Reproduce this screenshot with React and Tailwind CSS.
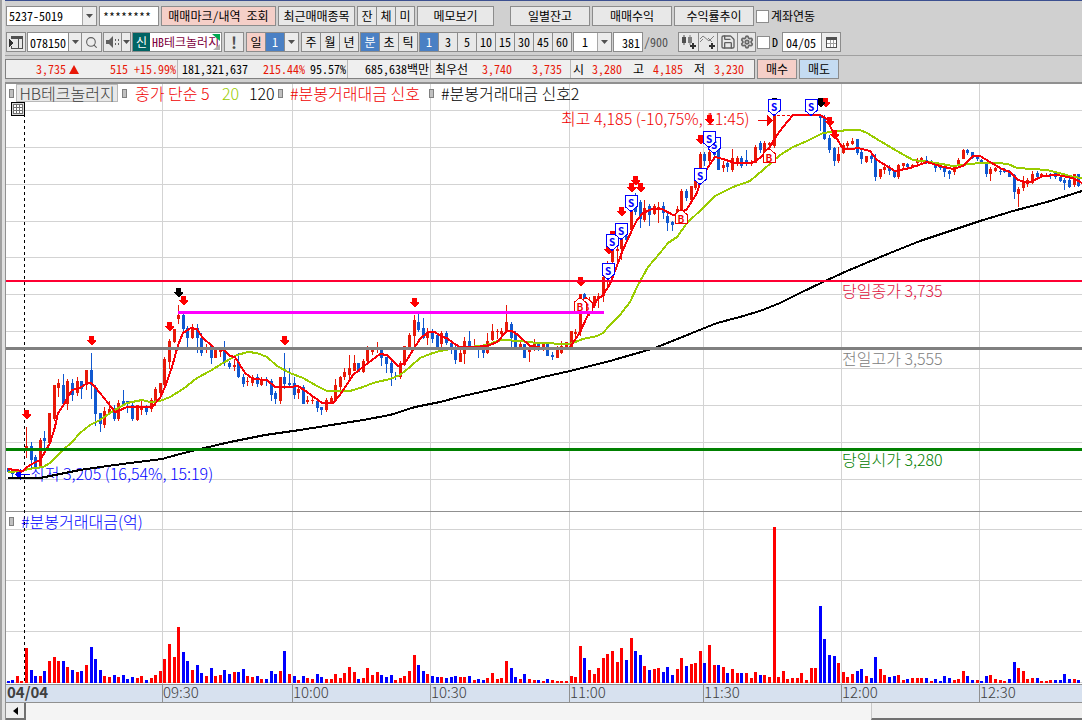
import React from "react";
import { Search, Settings, Save } from "lucide-react";

/* ---------- data ---------- */

// trade value per bar: direction (r = up, b = down) and height
const VOLUME = `
b2 b3 r7 r2 r35 b13 b7 r7 b12 r22 r26 r22 b22 r16 b13 r11 b12 r18 b36 b24 b13 r7 r6 b8 r6 b8 b4 b6 r5 r7
b3 r5 r8 r12 r24 r39 r26 r56 b31 b22 r13 b18 b10 r7 b15 r7 r8 b13 b9 r11 b11 b14 r7 r6 b7 r4 b4 b12 b9 r12
b32 r9 b7 r3 b7 r5 r4 b9 b6 r4 r4 r9 r5 r10 r16 r11 b4 r5 r15 r8 r11 b8 b6 b8 r3 r5 r7 r12 r28 b18
b12 r9 b7 b6 r6 b5 b6 b7 r6 r6 b7 r3 b4 b3 r5 r10 r4 r5 r22 b15 b6 r4 b9 r4 r3 b3 r2 b4 r3 r2
r2 r2 r7 r6 r37 b25 r13 r9 r15 r25 r29 r32 r21 r35 b23 r45 b32 b28 r17 b13 r14 r15 b11 b16 b8 r14 r25 b17 r19 r20
r32 b20 r38 r18 b18 r16 b10 r14 r10 b10 r10 r5 r11 b8 r8 r6 r156 r6 r12 r4 r5 r5 r10 r3 r15 r15 b77 b44 b28 b27
r20 r11 r6 r9 b12 b14 r7 b5 b26 r14 r8 b6 b7 r8 r3 b4 r5 r5 r5 b5 r2 b4 b2 b7 b5 r3 r4 r12 b7 b3
r3 b2 b7 r8 r4 r3 r2 b4 b21 r15 r12 r4 r5 b5 r2 r2 r3 b3 b3 b9 b4 r4 b3 b7`
  .trim()
  .split(/\s+/);

// candles: direction, high, body top, body bottom, low
const CANDLES = `
b,468,468,472,472 b,470,472,474,478 r,471,471,473,475 r,471,471,472,473 r,427,446,448,458 b,442,446,460,470
b,455,457,467,469 r,438,440,467,468 b,431,438,441,450 r,413,413,443,443 r,385,385,419,421 r,379,383,388,397
b,374,385,404,405 r,379,381,404,410 b,379,383,395,401 r,377,381,393,396 b,381,381,389,399 r,370,370,385,390
b,353,370,385,399 b,385,387,414,426 b,413,413,424,432 r,407,411,425,428 r,401,409,413,414 b,405,411,419,421
r,400,403,419,421 b,390,401,404,404 b,401,401,404,413 b,403,405,419,421 r,405,405,420,421 r,401,406,410,415
b,405,407,412,415 r,398,400,409,412 r,387,389,403,406 r,383,383,393,399 r,357,359,385,387 r,339,341,362,369
r,329,329,342,343 r,305,315,319,324 b,313,315,329,331 b,326,328,338,347 r,324,327,338,339 b,324,328,338,353
b,333,338,353,356 r,344,347,349,353 b,346,346,358,364 r,349,350,358,358 r,348,350,352,357 b,341,348,362,366
b,361,363,367,369 r,359,365,367,371 b,353,363,377,378 b,374,377,384,387 r,377,381,382,386 r,375,377,383,386
b,374,377,384,387 r,377,379,385,386 b,377,379,381,386 b,379,381,395,401 b,391,393,399,404 r,377,377,401,404
b,353,377,384,389 b,368,383,385,387 b,377,383,395,399 r,387,389,393,399 b,385,387,404,404 r,396,400,402,404
r,396,400,401,404 b,399,401,408,412 b,407,407,410,415 r,398,400,410,412 r,396,398,402,403 r,379,385,400,401
r,376,377,387,390 r,368,372,377,380 r,355,368,375,379 r,355,363,371,371 b,363,363,372,372 r,359,361,372,373
r,346,350,361,363 r,347,349,352,355 r,342,347,349,353 b,347,350,358,366 b,357,357,364,373 b,361,363,373,386
b,372,376,377,380 r,361,363,377,379 r,346,346,365,366 r,333,335,349,349 r,315,320,336,348 b,314,322,330,332
b,318,328,338,339 r,328,332,338,345 b,329,331,339,343 b,335,335,348,350 r,331,333,344,347 b,331,333,343,345
b,343,343,348,354 b,346,348,360,364 r,348,353,362,362 r,337,341,354,364 b,331,341,346,350 r,339,346,349,350
b,345,347,350,358 b,350,350,353,358 r,333,341,353,354 r,324,331,340,341 r,329,331,332,339 r,328,331,334,338
r,305,322,332,333 b,322,324,338,347 b,331,333,347,349 r,341,344,347,349 b,344,344,358,358 r,346,348,352,362
r,339,344,348,351 b,342,344,347,351 r,342,342,349,351 b,342,344,356,356 b,352,355,357,360 r,346,349,358,358
r,341,346,353,354 r,342,342,349,350 r,331,331,347,349 r,329,332,334,338 r,294,294,332,336 b,293,294,300,308
r,297,300,310,316 r,296,296,306,308 r,293,296,298,308 r,275,277,296,302 r,261,263,275,287 r,232,234,262,264
r,243,249,251,262 r,225,230,249,260 b,232,236,240,242 r,208,210,230,234 b,193,198,212,215 b,200,202,219,228
r,200,208,220,222 b,204,206,215,226 r,204,206,214,215 r,202,207,208,223 b,202,206,213,219 b,211,216,223,231
b,221,222,225,231 r,206,209,214,220 r,189,191,213,214 b,189,191,198,201 r,186,186,200,202 r,177,181,188,190
r,152,154,168,174 b,152,154,161,166 r,147,152,161,163 b,150,152,155,160 b,146,148,170,170 r,161,165,168,172
b,161,163,167,172 r,149,158,170,172 r,156,158,162,166 b,156,158,166,168 b,150,160,162,166 r,160,162,164,166
r,145,147,163,163 b,141,143,150,153 r,141,143,152,158 r,142,143,145,150 r,114,115,146,148 - - - - - - - - -
b,115,115,118,131 b,115,117,139,140 b,135,138,150,153 b,147,148,161,166 r,147,154,161,163 r,143,145,153,154
r,141,143,146,149 r,138,141,144,145 b,139,139,153,155 b,149,152,159,164 r,156,156,162,163 b,155,156,159,163
b,154,158,177,181 r,169,169,177,179 r,165,167,170,174 b,165,167,171,175 b,171,171,177,178 r,164,165,177,179
r,163,163,166,170 b,163,164,167,169 r,164,165,166,168 r,158,160,163,167 r,157,158,161,163 b,156,160,162,164
b,160,161,163,164 b,162,163,168,172 b,165,166,168,170 b,165,167,172,177 b,170,171,174,179 r,165,167,172,175
r,158,160,166,167 r,149,150,159,159 b,149,150,153,155 b,152,152,158,159 b,156,157,159,161 b,159,160,163,164
b,162,163,174,177 r,167,169,174,181 r,167,168,171,172 b,169,171,172,175 b,168,170,172,173 b,170,171,177,177
b,174,175,192,199 r,187,189,194,207 r,176,181,188,191 r,178,180,184,187 r,171,174,183,184 b,171,173,177,180
r,173,174,176,178 r,173,175,176,177 b,173,174,176,179 b,171,173,177,179 b,175,177,181,182 b,178,180,183,190
b,178,180,187,188 r,174,174,185,187 b,174,174,186,187 b,181,183,187,190`
  .trim()
  .split(/\s+/);

const MA5 =
  "8,469 15,470 23,471 27,467 32,464 40,460 45,452 50,443 55,427 58,413 63,406 68,397 72,390 80,388 87,383 91,383 95,387 100,393 108,403 115,412 118,411 127,407 152,407 160,398 165,387 172,367 178,345 183,333 191,328 197,329 202,337 213,347 220,350 224,350 230,356 235,357 240,365 245,373 253,379 267,380 275,387 290,387 298,386 307,392 322,403 333,403 340,395 353,375 368,363 380,354 387,355 398,366 405,363 413,350 420,339 428,332 435,332 442,337 447,338 453,343 460,347 477,347 490,345 497,342 507,331 512,331 518,335 530,346 550,349 568,349 573,343 580,332 588,315 597,300 603,295 610,284 618,263 622,252 631,232 637,220 643,213 652,209 662,209 673,215 678,215 687,209 697,193 700,183 708,167 715,157 723,159 735,163 752,163 760,158 770,147 775,138 783,127 793,115 820,115 827,119 832,130 843,149 852,149 858,148 870,151 877,160 895,171 910,168 927,162 940,166 953,169 963,166 973,156 980,156 990,162 1002,169 1010,172 1018,180 1028,183 1043,176 1057,175 1073,178 1082,183";
const MA20 =
  "8,472 22,471 28,469 43,467 50,463 63,450 72,442 80,433 90,425 100,420 113,411 127,403 142,400 150,402 160,401 170,397 183,389 197,378 210,371 223,363 237,355 248,352 257,353 267,357 277,366 290,373 303,378 317,386 327,391 350,391 363,387 373,383 390,379 400,375 410,367 420,358 430,354 440,351 450,349 470,347 487,345 497,341 503,340 520,341 537,343 570,344 583,339 597,336 603,333 610,325 620,315 630,302 638,285 648,267 660,253 668,243 677,237 687,223 703,208 715,196 733,187 750,181 763,170 780,155 793,147 807,141 823,133 840,131 847,130 860,130 867,133 880,141 897,151 913,160 930,162 953,166 980,163 997,163 1008,164 1017,168 1047,170 1063,174 1073,177 1082,178";
const MA120 =
  "8,478 40,478 60,474 80,470 100,467 130,463 162,459 180,454 200,449 230,442 265,435 300,430 363,420 390,415 415,407 440,402 463,396 490,390 517,384 543,377 570,371 590,366 610,361 655,348 702,329 717,323 740,317 760,311 780,303 800,293 823,282 847,271 890,253 920,241 947,232 980,221 1013,211 1047,202 1082,191";

const RED_ARROWS = [
  [26, 410], [91, 336], [169, 322], [183, 296], [284, 336], [414, 298], [580, 277],
  [608, 245], [612, 231], [621, 207], [631, 183], [635, 176], [640, 183], [700, 135],
  [709, 115], [825, 98], [829, 117], [834, 130],
];
const BLACK_ARROWS = [[178, 288], [774, 98], [820, 98]];
const SELLS = [[608, 263], [612, 234], [621, 223], [631, 195], [700, 168], [714, 137], [709, 131], [774, 99], [811, 99]];
const BUYS = [[586, 297], [580, 297], [681, 209], [769, 148]];
const TIMES = [[162, "09:30"], [292, "10:00"], [430, "10:30"], [569, "11:00"], [703, "11:30"], [841, "12:00"], [979, "12:30"]];
const H_GRID = [110, 147, 184, 221, 257, 294, 331, 368, 405, 442, 479, 529, 580, 631, 682];

const barX = (i) => Math.floor(8 + 4.615 * i);

/* ---------- chart ---------- */

function DownArrow({ x, y, color }) {
  return <path d={`M${x - 2} ${y}h5v4h2v1l-4 4h-1l-4 -4v-1h2z`} fill={color} />;
}

function SellMark({ x, y }) {
  return (
    <g>
      <path d={`M${x - 6} ${y + 0.5}h12v11l-6 5l-6 -5z`} fill="#fff" stroke="#0000ff" />
      <text x={x} y={y + 12} textAnchor="middle" fontSize="10" fontWeight="700" fill="#0000ff">S</text>
    </g>
  );
}

function BuyMark({ x, y }) {
  return (
    <g>
      <path d={`M${x - 6} ${y + 14.5}h12v-9l-6 -5l-6 5z`} fill="#fff" stroke="#f00000" />
      <text x={x} y={y + 14} textAnchor="middle" fontSize="10" fontWeight="700" fill="#f00000">B</text>
    </g>
  );
}

function Chart() {
  return (
    <svg
      className="block h-[619px] w-full font-['Noto_Sans_CJK_KR',sans-serif] text-base font-light"
      role="img"
      aria-label="HB테크놀러지 분봉 차트"
    >
      <g transform="translate(-6 -84)" shapeRendering="crispEdges">
        {H_GRID.map((y) => (
          <rect key={y} x="6" y={y} width="100%" height="1" fill="#d3d3d3" />
        ))}
        {TIMES.map(([x]) => (
          <rect key={x} x={x} y="84" width="1" height="600" fill="#d3d3d3" />
        ))}
        <rect x="6" y="511" width="100%" height="1" fill="#909090" />
        <path d="M24.5 84V684" stroke="#000" strokeDasharray="3 3" />

        {VOLUME.map((v, i) => {
          const h = Number(v.slice(1));
          return <rect key={i} x={barX(i) - 1} y={683 - h} width="3" height={h} fill={v[0] === "r" ? "#ff0000" : "#0000ff"} />;
        })}

        {CANDLES.map((c, i) => {
          if (c === "-") return null;
          const [dir, hi, top, bottom, lo] = c.split(",");
          const x = barX(i);
          return (
            <g key={i} fill={dir === "r" ? "#e81808" : "#1058d0"}>
              <rect x={x} y={hi} width="1" height={Math.max(1, lo - hi)} />
              <rect x={x - 1} y={top} width="3" height={Math.max(1, bottom - top)} />
            </g>
          );
        })}

        <g fill="#0000ff">
          <path d="M15 474.5l6 -6v12z" />
          <rect x="21" y="474" width="9" height="1" />
          <text x="30" y="480">최저 3,205 (16,54%, 15:19)</text>
        </g>

        <g fill="none" strokeWidth="2">
          <polyline points={MA20} stroke="#99cc00" />
          <polyline points={MA120} stroke="#000" />
          <polyline points={MA5} stroke="#f80008" />
        </g>

        <g fill="#f00000">
          <text x="561" y="125">최고 4,185 (-10,75%, 11:45)</text>
          <rect x="758" y="120" width="9" height="1" />
          <path d="M767 115l6 5.5l-6 5.5z" />
          <path d="M777 115.5H793" stroke="#f00000" strokeDasharray="3 2" />
        </g>

        {RED_ARROWS.map(([x, y]) => <DownArrow key={`${x}-${y}`} x={x} y={y} color="#ff0000" />)}
        {BLACK_ARROWS.map(([x, y]) => <DownArrow key={x} x={x} y={y} color="#000" />)}
        {BUYS.map(([x, y]) => <BuyMark key={x} x={x} y={y} />)}
        {SELLS.map(([x, y]) => <SellMark key={x} x={x} y={y} />)}

        <rect x="6" y="280" width="100%" height="2" fill="#ff0033" />
        <rect x="6" y="347" width="100%" height="3" fill="#808080" />
        <rect x="6" y="448" width="100%" height="3" fill="#008000" />
        <rect x="178" y="311" width="426" height="3" fill="#ff00ff" />

        <text x="842" y="297" fill="#e0103c">당일종가 3,735</text>
        <text x="842" y="365" fill="#808080">전일고가 3,555</text>
        <text x="842" y="466" fill="#008000">당일시가 3,280</text>

        <rect x="6" y="684" width="100%" height="19" fill="#d7e1ef" />
        <rect x="6" y="684" width="100%" height="1" fill="#909090" />
        <rect x="6" y="702" width="100%" height="1" fill="#909090" />
        <g fontSize="15" fill="#404040">
          <text x="7" y="698" fontWeight="700">04/04</text>
          {TIMES.map(([x, t]) => (
            <g key={t}>
              <rect x={x} y="684" width="1" height="19" fill="#909090" />
              <text x={x + 1} y="698">{t}</text>
            </g>
          ))}
        </g>
      </g>
    </svg>
  );
}

/* ---------- toolbar pieces ---------- */

const edge = "border border-[#8c8c8c]";

function Tri({ className = "" }) {
  return (
    <svg aria-hidden="true" className={`h-[4px] w-[7px] ${className}`} viewBox="0 0 7 4">
      <path d="M0 0h7L3.5 4z" fill="#505050" />
    </svg>
  );
}

function DropButton({ label, className = "w-[14px]" }) {
  return (
    <button aria-label={label} className={`flex h-5 shrink-0 items-center justify-center border-y border-r border-[#8c8c8c] bg-[#ececec] ${className}`}>
      <Tri />
    </button>
  );
}

function Btn({ children, className = "", tone = "bg-[#e8e8e8]", label }) {
  return (
    <button aria-label={label} className={`flex h-5 shrink-0 items-center justify-center whitespace-pre ${edge} ${tone} ${className}`}>
      {children}
    </button>
  );
}

function Segments({ items, active, className = "" }) {
  return (
    <div className={`flex shrink-0 ${edge} ${className}`}>
      {items.map((t) => (
        <button
          key={t}
          aria-pressed={t === active}
          className={`h-[18px] flex-1 border-r border-[#8c8c8c] last:border-r-0 ${t === active ? "bg-[#4a80c4] text-white" : "bg-[#e8e8e8]"}`}
        >
          {t}
        </button>
      ))}
    </div>
  );
}

function Select({ label, value, className }) {
  return (
    <div className={`relative h-5 shrink-0 ${edge} bg-white ${className}`}>
      <select aria-label={label} defaultValue={value} className="block h-[18px] w-full appearance-none bg-transparent px-[2px] outline-none">
        <option>{value}</option>
      </select>
      <span className="pointer-events-none absolute inset-y-0 right-0 flex w-[14px] items-center justify-center border-l border-[#a8a8a8] bg-[#ececec]">
        <Tri />
      </span>
    </div>
  );
}

function Check({ id, label }) {
  return (
    <div className="flex shrink-0 items-center gap-[2px]">
      <input id={id} type="checkbox" className="h-[13px] w-[13px] appearance-none border border-[#8c8c8c] bg-white" />
      <label htmlFor={id}>{label}</label>
    </div>
  );
}

function Stat({ children, className = "" }) {
  return <span className={`shrink-0 text-right ${className}`}>{children}</span>;
}

function Marker() {
  return <span className="h-[9px] w-[5px] shrink-0 border border-[#808080] bg-[#c0c0c0]" />;
}

/* ---------- page ---------- */

export default function App() {
  return (
    <div className="flex min-h-screen overflow-hidden bg-[#d0d0d0] font-['Noto_Sans_Mono_CJK_KR','Noto_Sans_CJK_KR',monospace] text-xs leading-4 text-black">
      <div className="w-[5px] shrink-0 border-r-3 border-[#e0e0e0] bg-[#a0a0a0]" />
      <div className="min-w-0 flex-1">
        <header className="overflow-hidden border-t border-[#3c5090] whitespace-nowrap">
          <div className="flex items-center gap-[2px] pt-[5px] pl-px">
            <Select label="계좌" value="5237-5019" className="w-[91px]" />
            <input aria-label="비밀번호" defaultValue="********" className={`h-5 w-[60px] shrink-0 bg-white px-[3px] outline-none ${edge}`} />
            <Btn tone="bg-[#f5cfc8]" className="w-[115px]">매매마크/내역 조회</Btn>
            <Btn className="w-[77px]">최근매매종목</Btn>
            <Segments items={["잔", "체", "미"]} className="w-[58px]" />
            <Btn className="w-[77px]">메모보기</Btn>
            <Btn className="ml-[14px] w-[80px]">일별잔고</Btn>
            <Btn className="w-[80px]">매매수익</Btn>
            <Btn className="w-[80px]">수익률추이</Btn>
            <Check id="link-account" label="계좌연동" />
          </div>

          <div className="flex items-center gap-px border-b border-[#a0a0a0] pt-[6px] pb-[3px] pl-px">
            <Btn label="창 전환" className="w-[20px]">
              <svg className="h-[14px] w-[14px]" viewBox="0 0 14 14" fill="none" shapeRendering="crispEdges">
                <path d="M2.5 3V1.500H13.500V13H2.500V11" stroke="#505050" />
                <path d="M2 1h12v3H2z" fill="#505050" />
                <path d="M9.500 4v9" stroke="#505050" />
                <path d="M0 4v8h1v-1h1v-1h1V9h1V7H3V6H2V5H1V4z" fill="#303030" />
              </svg>
            </Btn>
            <div className="flex">
              <input aria-label="종목코드" defaultValue="078150" className={`h-5 w-[42px] bg-white px-[2px] outline-none ${edge}`} />
              <DropButton label="종목 목록" className="w-[13px]" />
              <button aria-label="종목 검색" className="flex h-5 w-[20px] items-center justify-center border-y border-r border-[#8c8c8c] bg-[#ececec]">
                <Search size={13} strokeWidth={2} color="#606060" />
              </button>
            </div>
            <div className="flex">
              <Btn label="소리" className="w-[19px]">
                <svg className="h-3 w-[14px]" viewBox="0 0 14 12">
                  <path d="M0 4h3l4 -4v12l-4 -4H0z" fill="#606060" />
                  <path d="M9 3h1v2H9zM12 3h1v2h-1zM9 7h1v2H9zM12 7h1v2h-1z" fill="#606060" />
                </svg>
              </Btn>
              <DropButton label="소리 설정" className="w-[9px]" />
            </div>
            <div className={`relative flex h-5 w-[90px] shrink-0 items-center bg-white ${edge}`}>
              <span className="flex h-[18px] w-[17px] items-center justify-center bg-[#006464] text-white">신</span>
              <span className="w-[70px] overflow-hidden pl-[2px] text-[#800040]">HB테크놀러지</span>
              <svg aria-hidden="true" className="absolute right-px bottom-px h-4 w-2" viewBox="0 0 8 16">
                <path d="M0 0h8v7z" fill="#00a850" />
                <path d="M8 10v6H1z" fill="#b0b0b0" />
              </svg>
            </div>
            <Btn className="mx-px w-[20px] text-base font-bold text-[#505050]">!</Btn>
            <div className="flex">
              <Btn tone="bg-[#f5cfc8]" className="w-[19px] border-r-0">일</Btn>
              <Btn tone="bg-[#4a80c4]" className="w-[20px] text-white">1</Btn>
              <DropButton label="일 주기" />
            </div>
            <Segments items={["주", "월", "년"]} className="ml-px w-[58px]" />
            <Segments items={["분", "초", "틱"]} active="분" className="w-[58px]" />
            <Segments items={["1", "3", "5", "10", "15", "30", "45", "60"]} active="1" className="w-[153px]" />
            <Select label="분 주기" value="1" className="w-[39px] pl-[6px]" />
            <input aria-label="표시 봉 수" defaultValue="381" className={`h-5 w-[30px] shrink-0 bg-white px-[2px] text-right outline-none ${edge}`} />
            <span className="w-[33px] shrink-0 text-[#505050]">/900</span>
            <div className="flex">
              <Btn label="봉 추가" className="w-[20px] border-r-0">
                <svg className="h-[14px] w-[16px]" viewBox="0 0 16 14">
                  <path d="M1 2h4v6H1zM2.500 0h1v10h-1z" fill="#505050" />
                  <path d="M7 2h4v6H7zM8.500 0h1v10h-1z" fill="#808080" />
                  <path d="M11 8h2v2h2v2h-2v2h-2v-2H9v-2h2z" fill="#303030" />
                </svg>
              </Btn>
              <Btn label="지표 추가" className="w-[19px] border-r-0">
                <svg className="h-[14px] w-[16px]" viewBox="0 0 16 14">
                  <path d="M0 4l3 -3l6 5l5 -5M0 7l3 -3M8 3l4 4" fill="none" stroke="#808080" />
                  <path d="M11 8h2v2h2v2h-2v2h-2v-2H9v-2h2z" fill="#303030" />
                </svg>
              </Btn>
              <Btn label="저장" className="w-[20px] border-r-0">
                <Save size={16} strokeWidth={2} color="#606060" />
              </Btn>
              <Btn label="설정" className="w-[19px]">
                <Settings size={14} strokeWidth={3} color="#686868" />
              </Btn>
            </div>
            <div className="w-[24px]"><Check id="use-date" label="D" /></div>
            <div className="flex">
              <input aria-label="날짜" defaultValue="04/05" className={`h-5 w-[40px] bg-white px-[3px] outline-none ${edge}`} />
              <button aria-label="달력" className="flex h-5 w-[19px] items-center justify-center border-y border-r border-[#8c8c8c] bg-[#ececec]">
                <svg className="h-[11px] w-[11px]" viewBox="0 0 11 11" shapeRendering="crispEdges">
                  <path d="M0 0h11v11H0z" fill="#505050" />
                  <path d="M1 3h9v7H1z" fill="#fff" />
                  <path d="M1 6.500h9M4 3v7M7 3v7" stroke="#a0a0a0" />
                </svg>
              </button>
            </div>
          </div>

          <div className="flex items-center gap-[2px] pt-[3px] pb-[3px]">
            <div className="flex h-5 w-[750px] shrink-0 items-center border border-[#808080] bg-[#efefef]">
              <Stat className="w-[60px] text-[#e81808]">3,735</Stat>
              <svg aria-label="상승" className="ml-[3px] h-[9px] w-[10px] shrink-0" viewBox="0 0 10 9"><path d="M5 0l5 9H0z" fill="#e81808" /></svg>
              <Stat className="w-[49px] text-[#e81808]">515</Stat>
              <Stat className="w-[48px] text-[#e81808]">+15.99%</Stat>
              <div className="ml-px flex h-[18px] w-[171px] items-center border-x border-[#b8b8b8]">
                <Stat className="w-[70px]">181,321,637</Stat>
                <Stat className="w-[57px] text-[#e81808]">215.44%</Stat>
                <Stat className="w-[41px]">95.57%</Stat>
              </div>
              <Stat className="w-[81px]">685,638백만</Stat>
              <div className="ml-px flex h-[18px] w-[141px] items-center border-x border-[#b8b8b8]">
                <Stat className="w-[37px]">최우선</Stat>
                <Stat className="w-[44px] text-[#e81808]">3,740</Stat>
                <Stat className="w-[50px] text-[#e81808]">3,735</Stat>
              </div>
              <Stat className="w-[13px]">시</Stat>
              <Stat className="w-[38px] text-[#e81808]">3,280</Stat>
              <Stat className="w-[22px]">고</Stat>
              <Stat className="w-[39px] text-[#e81808]">4,185</Stat>
              <Stat className="w-[22px]">저</Stat>
              <Stat className="w-[39px] text-[#e81808]">3,230</Stat>
            </div>
            <Btn tone="bg-[#f5cfc8]" className="w-[40px]">매수</Btn>
            <Btn tone="bg-[#c5dcf2]" className="w-[40px]">매도</Btn>
          </div>
        </header>

        <main className="relative overflow-hidden border-t-2 border-l border-[#909090] bg-white">
          <Chart />
          <div className="absolute top-0 left-[3px] flex h-[18px] items-center whitespace-pre font-['Noto_Sans_CJK_KR',sans-serif] text-base leading-[18px] font-light">
            <Marker />
            <span className="ml-[2px] w-[102px] border border-[#b8b8b8] bg-[#e8e8e8] text-center leading-4 text-[#404040]">HB테크놀러지</span>
            <span className="w-1" />
            <Marker />
            <span className="w-[95px] pl-[8px] text-[#f00000]">종가 단순 5</span>
            <span className="w-[27px] text-[#99cc00]">20</span>
            <span className="w-[29px]">120</span>
            <Marker />
            <span className="w-[146px] pl-[7px] text-[#f00000]">#분봉거래대금 신호</span>
            <Marker />
            <span className="pl-[7px]">#분봉거래대금 신호2</span>
          </div>
          <button aria-label="표 보기" className="absolute top-[18px] left-[5px] flex h-[14px] w-[14px] items-center justify-center border border-black bg-[#d8d8d8]">
            <svg className="h-[10px] w-[10px]" viewBox="0 0 10 10" shapeRendering="crispEdges">
              <path d="M0 0h10v10H0z" fill="#fff" />
              <path d="M0 .5h10M0 3.500h10M0 6.500h10M0 9.500h10M.5 0v10M3.500 0v10M6.500 0v10M9.500 0v10" stroke="#707070" />
            </svg>
          </button>
          <div className="absolute top-[428px] left-[3px] flex h-[18px] items-center gap-[7px] font-['Noto_Sans_CJK_KR',sans-serif] text-base leading-[18px] font-light text-[#0000ff]">
            <Marker />
            <span>#분봉거래대금(억)</span>
          </div>
        </main>

        <div className="flex h-[17px] border-l border-[#909090] bg-[#f4f4f4]">
          <button aria-label="왼쪽으로" className="flex w-[20px] items-center justify-center border-r-2 border-b-2 border-[#707070] bg-[#efefef]">
            <svg className="h-[8px] w-[5px]" viewBox="0 0 5 8"><path d="M5 0v8L0 4z" fill="#000" /></svg>
          </button>
          <div className="flex flex-1 justify-end">
            <div className="w-1/5 border-b-2 border-l border-b-[#707070] border-l-[#c8c8c8] bg-[#efefef]" />
          </div>
        </div>
      </div>
    </div>
  );
}
